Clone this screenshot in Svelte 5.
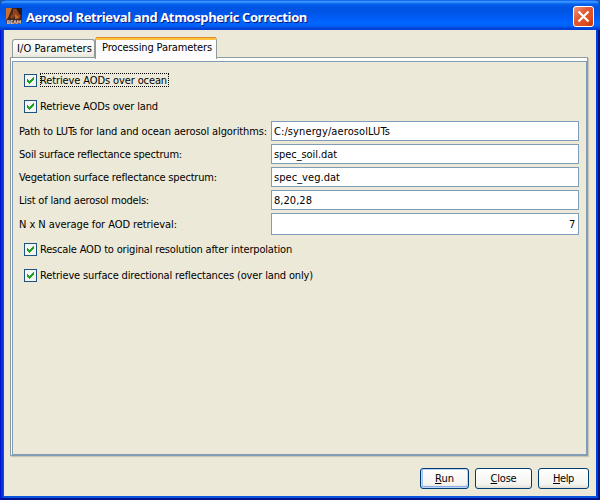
<script>
  const options = [
    { label: 'Retrieve AODs over ocean', width: 127, focused: true },
    { label: 'Retrieve AODs over land', width: 118 }
  ];
  const fields = [
    { label: 'Path to LUTs for land and ocean aerosol algorithms:', width: 248, value: 'C:/synergy/aerosolLUTs', valueWidth: 116 },
    { label: 'Soil surface reflectance spectrum:', width: 163, value: 'spec_soil.dat', valueWidth: 63 },
    { label: 'Vegetation surface reflectance spectrum:', width: 198, value: 'spec_veg.dat', valueWidth: 66 },
    { label: 'List of land aerosol models:', width: 130, value: '8,20,28', valueWidth: 38 },
    { label: 'N x N average for AOD retrieval:', width: 158, value: '7', valueWidth: 7, numeric: true }
  ];
  const postOptions = [
    { label: 'Rescale AOD to original resolution after interpolation', width: 252 },
    { label: 'Retrieve surface directional reflectances (over land only)', width: 273 }
  ];
  const buttons = [
    { key: 'R', rest: 'un', width: 19, size: 49, primary: true },
    { key: 'C', rest: 'lose', width: 26, size: 57 },
    { key: 'H', rest: 'elp', width: 21, size: 51 }
  ];

  function fit(node, width) {
    const natural = node.getBoundingClientRect().width;
    node.style.letterSpacing = `${(width - natural) / node.textContent.length}px`;
  }
</script>

{#snippet check(item)}
  <div class="check">
    <svg class="box" width="13" height="13" viewBox="0 0 13 13" shape-rendering="crispEdges">
      <rect width="13" height="13" fill="#1d5281" />
      <rect x="1" y="1" width="11" height="11" fill="#f4f4f0" />
      <path d="M3 5h1v1h1v1h1v-1h1v-1h1v-1h1v-1h1v3h-1v1h-1v1h-1v1h-1v1h-1v-1h-1v-1h-1z" fill="#21a121" />
    </svg>
    <span class="caption" class:focused={item.focused}><span class="t" use:fit={item.width}>{item.label}</span></span>
  </div>
{/snippet}

<div class="window">
  <header>
    <svg class="logo" width="16" height="16" viewBox="0 0 16 16">
      <rect width="16" height="16" fill="#48251a" />
      <path d="M0 0h6L4 5 2 10 0 12z" fill="#c9702c" />
      <path d="M7 1h5l3 6-2 3-4-2-3 3-2-2 3-4z" fill="#8f421e" />
      <path d="M10 0h6v8l-3-2z" fill="#2c1712" />
      <path d="M9 6l5 4-5 1z" fill="#c56a2a" />
      <text x="0.5" y="15.5" font-size="5" textLength="15" fill="#d5c8c2">BEAM</text>
    </svg>
    <h1><span class="t" use:fit={281}>Aerosol Retrieval and Atmospheric Correction</span></h1>
    <svg class="close" width="21" height="21" viewBox="0 0 21 21">
      <defs>
        <linearGradient id="red" x1="0" y1="0" x2="1" y2="1">
          <stop offset="0" stop-color="#ee9a80" />
          <stop offset=".4" stop-color="#e25a35" />
          <stop offset=".75" stop-color="#e04b1c" />
          <stop offset="1" stop-color="#b83206" />
        </linearGradient>
      </defs>
      <rect x=".5" y=".5" width="20" height="20" rx="2.5" fill="url(#red)" stroke="#fff" />
      <path d="M5.5 5.5l10 10M15.5 5.5l-10 10" stroke="#fff" stroke-width="2.2" />
    </svg>
  </header>

  <main>
    <nav>
      <div class="tab"><span class="t" use:fit={75}>I/O Parameters</span></div>
      <div class="tab active"><span class="t" use:fit={110}>Processing Parameters</span></div>
    </nav>
    <section>
      <div class="pane">
        {#each options as item}{@render check(item)}{/each}
        <div class="fields">
          {#each fields as f}
            <div class="row" class:numeric={f.numeric}>
              <div class="name"><span class="t" use:fit={f.width}>{f.label}</span></div>
              <div class="input"><span class="t" use:fit={f.valueWidth}>{f.value}</span></div>
            </div>
          {/each}
        </div>
        {#each postOptions as item}{@render check(item)}{/each}
      </div>
    </section>
    <footer>
      {#each buttons as b}
        <button class:primary={b.primary} style:width="{b.size}px"><span class="t" use:fit={b.width}><u>{b.key}</u>{b.rest}</span></button>
      {/each}
    </footer>
  </main>
</div>

<style>
  :global(body) { margin: 0; background: #1c5a9c; }
  .window {
    width: 600px; height: 500px; box-sizing: border-box; overflow: hidden;
    display: flex; flex-direction: column;
    padding: 0 4px 4px;
    background: #0831d9;
    border-radius: 6px 6px 0 0;
    box-shadow: inset 1px 0 #0019cf, inset -2px -2px #00138c, inset 3px 0 #0831d9, inset 4px -4px #0855dd, inset -4px 0 #003dde;
    font: 11px/14px "DejaVu Sans Condensed", "DejaVu Sans", sans-serif;
    color: #000;
  }
  .t { display: inline-block; white-space: pre; }
  header {
    height: 30px; flex: none; box-sizing: border-box; margin: 0 -4px; padding: 0 6px;
    display: flex; align-items: center;
    background: linear-gradient(#0058ee 0, #3a93ff 1.5px, #2b88ff 2.5px, #0562ea 4px, #0054e3 7px, #0055e5 12px, #005dfa 19px, #0066ff 23px, #0061fc 26px, #0046d5 28px, #003dd7 30px);
  }
  .logo { margin-top: 2px; }
  .logo text { font-family: "DejaVu Sans", sans-serif; font-weight: bold; }
  h1 {
    flex: 1; margin: 4px 0 0 4px;
    font: bold 13px/18px "Open Sans", "Noto Sans", sans-serif;
    color: #fff; text-shadow: 1px 1px #0a1883;
  }
  .close { margin-top: 3px; }
  main {
    flex: 1; display: flex; flex-direction: column;
    padding: 7px 7px 0 6px; background: #ece9d8;
  }
  nav { height: 20px; display: flex; align-items: flex-end; padding-left: 2px; }
  .tab {
    position: relative; box-sizing: border-box; width: 83px; height: 18px;
    padding: 2px 0 0 4px;
    border: 1px solid #919b9c; border-bottom: 0; border-radius: 3px 3px 0 0;
    background: linear-gradient(#fff, #f4f3ee 70%, #e9e7dc);
  }
  .tab.active {
    z-index: 1; width: 122px; height: 22px; margin-bottom: -2px;
    padding: 1px 0 0 6px;
    border-top: 3px solid #ffc23c; background: #fcfcfe;
    box-shadow: inset 0 1px #fff;
  }
  .tab.active::before {
    content: ""; position: absolute; left: 0; right: 0; top: -3px; height: 1px; background: #e68b2c;
  }
  section {
    box-sizing: border-box; width: 578px; height: 399px;
    padding: 3px 0 0 1px;
    border: 1px solid #919b9c; border-right-color: #849cb0; border-bottom-color: #849cb0; background: #fff;
    box-shadow: 1px 1px 1px #c9c6b8;
  }
  .pane {
    box-sizing: border-box; height: 394px; padding-top: 5px;
    border: 1px solid #7f9db9; background: #ece9d8;
  }
  .check { height: 26px; padding-left: 11px; display: flex; align-items: center; }
  .box { flex: none; }
  .caption { height: 14px; margin-left: 3px; padding-right: 2px; }
  .caption .t { padding-top: 1px; }
  .focused { outline: 1px dotted #000; outline-offset: -1px; }
  .fields { padding: 2px 7px 1px 6px; display: flex; flex-direction: column; gap: 3px; }
  .row { display: flex; align-items: center; height: 20px; }
  .row.numeric { height: 22px; }
  .row .t { padding-top: 2px; }
  .name { width: 252px; flex: none; }
  .input {
    flex: 1; box-sizing: border-box; height: 100%; padding: 0 2px;
    display: flex; align-items: center;
    border: 1px solid #7f9db9; background: #fff;
  }
  .numeric .input { justify-content: flex-end; }
  footer { display: flex; justify-content: flex-end; gap: 6px; padding: 12px 0 0; }
  button {
    box-sizing: border-box; height: 21px; padding: 0;
    border: 1px solid #003c74; border-radius: 3px;
    background: linear-gradient(#fff, #f4f3ee 80%, #e2dfd5);
    font: inherit; color: #000;
    display: flex; align-items: center; justify-content: center;
  }
  .primary { box-shadow: inset 0 0 0 1px #bcd4f6, inset -1px -2px #89ade4, inset 2px 0 #a8c2ee; }
  u { text-underline-offset: 1px; text-decoration-skip-ink: none; }
</style>
